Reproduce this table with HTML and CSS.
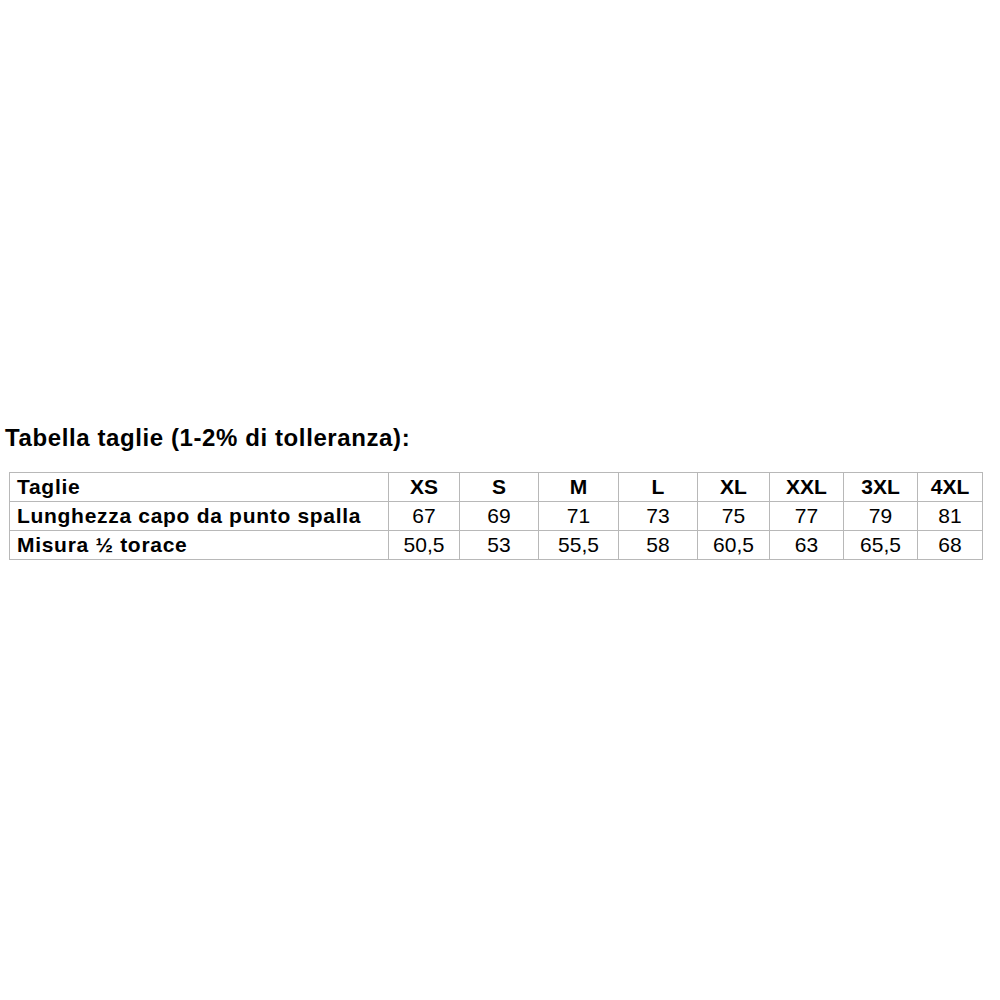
FILE: index.html
```html
<!DOCTYPE html>
<html lang="it">
<head>
<meta charset="utf-8">
<title>Tabella taglie</title>
<link rel="stylesheet" href="styles.css">
</head>
<body>
<div class="page">
  <h1 class="title">Tabella taglie (1-2% di tolleranza):</h1>
  <table class="sizes">
    <colgroup>
      <col class="c-label">
      <col class="c-xs">
      <col class="c-s">
      <col class="c-m">
      <col class="c-l">
      <col class="c-xl">
      <col class="c-xxl">
      <col class="c-3xl">
      <col class="c-4xl">
    </colgroup>
    <tbody>
      <tr class="head">
        <th class="label">Taglie</th>
        <th>XS</th><th>S</th><th>M</th><th>L</th><th>XL</th><th>XXL</th><th>3XL</th><th>4XL</th>
      </tr>
      <tr>
        <th class="label">Lunghezza capo da punto spalla</th>
        <td>67</td><td>69</td><td>71</td><td>73</td><td>75</td><td>77</td><td>79</td><td>81</td>
      </tr>
      <tr>
        <th class="label">Misura ½ torace</th>
        <td>50,5</td><td>53</td><td>55,5</td><td>58</td><td>60,5</td><td>63</td><td>65,5</td><td>68</td>
      </tr>
    </tbody>
  </table>
</div>
</body>
</html>
```
FILE: styles.css
```css
html, body {
  margin: 0;
  padding: 0;
  background: #ffffff;
}
body {
  font-family: "Liberation Sans", Arial, sans-serif;
  color: #000000;
}
.page {
  padding: 425px 0 0 0;
}
.title {
  margin: 0 0 22px 5px;
  font-size: 24px;
  font-weight: bold;
  line-height: 25px;
  letter-spacing: 0.6px;
}
.sizes {
  margin-left: 9px;
  width: 974px;
  border-collapse: collapse;
  table-layout: fixed;
  font-size: 21px;
}
.sizes th,
.sizes td {
  border: 1px solid #b8b8b8;
  padding: 0;
  line-height: 28px;
  text-align: center;
  white-space: nowrap;
}
.sizes th {
  font-weight: bold;
}
.sizes td {
  font-weight: normal;
}
.sizes .label {
  text-align: left;
  padding-left: 7px;
  letter-spacing: 0.7px;
}
.c-label { width: 379px; }
.c-xs { width: 71px; }
.c-s { width: 79px; }
.c-m { width: 80px; }
.c-l { width: 79px; }
.c-xl { width: 72px; }
.c-xxl { width: 74px; }
.c-3xl { width: 74px; }
.c-4xl { width: 65px; }
```
